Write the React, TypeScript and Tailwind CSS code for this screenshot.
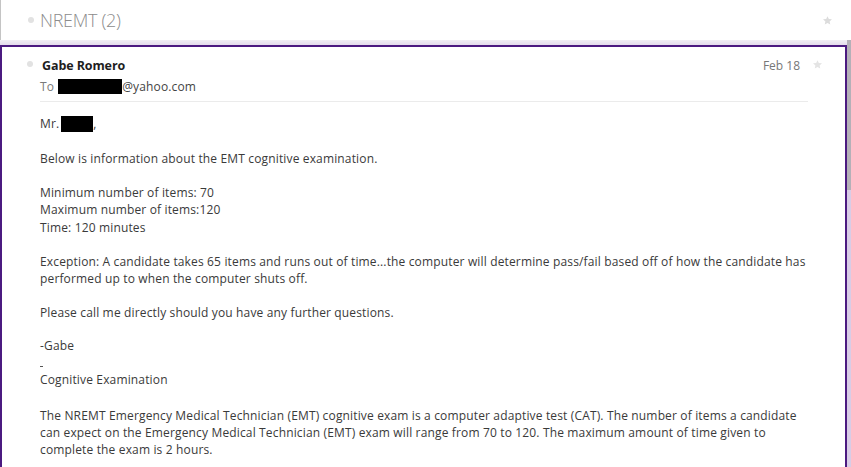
import React from "react";

const Star = ({ className = "" }: { className?: string }) => (
  <svg viewBox="0 0 24 24" className={className} fill="currentColor">
    <path d="M12 2.5l2.9 6.3 6.9.7-5.2 4.6 1.5 6.8L12 17.4l-6.1 3.5 1.5-6.8L2.2 9.5l6.9-.7z" />
  </svg>
);

export default function App() {
  return (
    <div
      className="w-[851px] h-[467px] overflow-hidden bg-white flex text-[12px] text-[#3a3a3a]"
      style={{ fontFamily: '"Open Sans", "Noto Sans", sans-serif' }}
    >
      <div className="flex-1 flex flex-col min-w-0">
        <div className="h-[40px] shrink-0 border-l border-[#c4c4c4] flex items-center">
          <div className="w-[39px] flex justify-end pr-[6px]">
            <span className="block w-[6px] h-[6px] rounded-full bg-[#e2e2e2]" />
          </div>
          <span className="text-[18px] font-light text-[#8c8c8c] tracking-[-0.3px]">NREMT (2)</span>
          <div className="flex-1" />
          <Star className="w-[11px] h-[11px] text-[#dcdcdc] mr-[14px]" />
        </div>
        <div className="h-[5px] shrink-0 bg-gradient-to-b from-[#f1eef4] to-[#e4dcec]" />
        <div className="flex-1 border-t-2 border-l-2 border-r-2 border-[#4b1a80] flex">
          <div className="w-[38px] shrink-0 pt-[14px] flex justify-end pr-[7px]">
            <span className="block w-[6px] h-[6px] rounded-full bg-[#e2e2e2]" />
          </div>
          <div className="w-[768px] shrink-0 pt-[10px]">
            <div className="flex items-center h-[18px]">
              <span className="font-bold text-[12.5px] text-[#1e1e1e] ml-[2px] tracking-[-0.1px]">Gabe Romero</span>
              <div className="flex-1" />
              <span className="text-[#777] mr-[8px]">Feb 18</span>
            </div>
            <div className="flex items-center h-[21px] mt-[1px]">
              <span className="text-[#7a7a7a] mr-[5px] tracking-[0.15px]">To</span>
              <span className="inline-block w-[64px] h-[15px] bg-black -ml-[1px]" />
              <span className="text-[#444] tracking-[0.15px]">@yahoo.com</span>
            </div>
            <div className="mt-[4px] h-px bg-[#ebebeb]" />
            <div className="pt-[14px] leading-[17.1px] tracking-[0.15px]">
              <div className="flex items-center -mt-[1px] mb-[1px]">
                <span>Mr.</span>
                <span className="inline-block w-[32px] h-[16px] bg-black ml-[2px]" />
                <span>,</span>
              </div>
              <div className="h-[17.1px]" />
              <div>Below is information about the EMT cognitive examination.</div>
              <div className="h-[17.1px]" />
              <div>Minimum number of items: 70</div>
              <div>Maximum number of items:120</div>
              <div>Time: 120 minutes</div>
              <div className="h-[17.1px]" />
              <div className="pr-[2px]">
                Exception: A candidate takes 65 items and runs out of time...the computer will determine pass/fail based off of how the candidate has performed up to when the computer shuts off.
              </div>
              <div className="h-[17.1px]" />
              <div>Please call me directly should you have any further questions.</div>
              <div className="h-[17.1px]" />
              <div className="-mt-[1px] mb-[1px]">-Gabe</div>
              <div className="h-[17.1px] pt-[11px]">
                <span className="block w-[3px] h-px bg-[#555]" />
              </div>
              <div className="-mt-[1px] mb-[1px]">Cognitive Examination</div>
              <div className="h-[17.1px]" />
              <div className="pr-[2px]">
                The NREMT Emergency Medical Technician (EMT) cognitive exam is a computer adaptive test (CAT). The number of items a candidate can expect on the Emergency Medical Technician (EMT) exam will range from 70 to 120. The maximum amount of time given to complete the exam is 2 hours.
              </div>
            </div>
          </div>
          <div className="flex-1 pt-[12px] flex justify-center">
            <Star className="w-[11px] h-[11px] text-[#e4e4e4] mr-[18px]" />
          </div>
        </div>
      </div>
      <div className="w-[4px] shrink-0 flex flex-col">
        <div className="h-[40px] bg-white" />
        <div className="h-[150px] bg-[#b4b0b8]" />
        <div className="flex-1 bg-[#d8cce6]" />
      </div>
    </div>
  );
}
